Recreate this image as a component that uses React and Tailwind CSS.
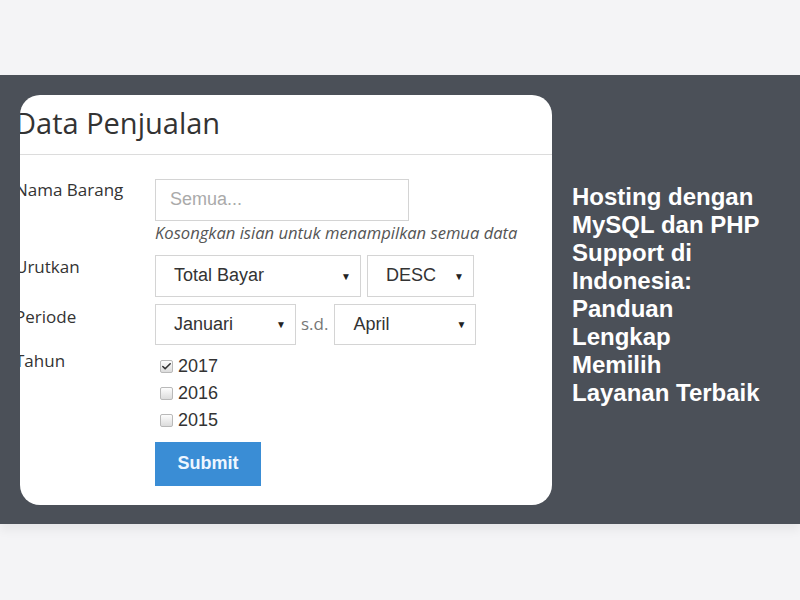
import { Check } from 'lucide-react'

const label = "w-[140px] shrink-0 font-['Open_Sans',sans-serif] text-[17px] text-[#333]"
const ctrl = "font-['Liberation_Sans',Arial,sans-serif] text-[18px] text-[#333]"

function Select({ value, width, pad = 'pl-[18px]', className = '' }) {
  return (
    <div
      className={`flex items-center justify-between border border-[#d4d4d4] bg-white pr-[9px] ${pad} ${className}`}
      style={{ width }}
    >
      <span className={ctrl}>{value}</span>
      <span className="text-[10px] leading-none text-[#222]">▼</span>
    </div>
  )
}

function Year({ year, checked }) {
  return (
    <div className="flex h-[27px] items-center">
      <span className="ml-[5px] flex h-[13px] w-[13px] items-center justify-center rounded-[2px] border border-[#b9b9b9] bg-gradient-to-b from-[#fdfdfd] to-[#dcdcdc]">
        {checked && <Check size={11} strokeWidth={3.5} className="text-[#333]" />}
      </span>
      <span className={`ml-[5px] ${ctrl}`}>{year}</span>
    </div>
  )
}

export default function App() {
  return (
    <main className="min-h-[600px] bg-[#f4f4f6] pt-[75px]">
      <section className="flex h-[449px] items-center bg-[#4b5058] pl-[20px] shadow-[0_6px_10px_rgba(0,0,0,0.06)]">
        {/* form card */}
        <div className="h-[410px] w-[532px] shrink-0 overflow-hidden rounded-[20px] bg-white">
          <div className="-ml-[5px]">
            <h1 className="pt-[8px] font-['Open_Sans',sans-serif] text-[29px] leading-[40px] text-[#333]">
              Data Penjualan
            </h1>
            <div className="mt-[11px] ml-[5px] h-px bg-[#dcdcdc]" />

            <div className="mt-[24px] flex">
              <div className={`${label} -mt-[2px]`}>Nama Barang</div>
              <div>
                <div className="flex h-[42px] w-[254px] items-center border border-[#d4d4d4] pl-[14px]">
                  <span className="font-['Liberation_Sans',Arial,sans-serif] text-[18px] text-[#aaa]">Semua...</span>
                </div>
                <p className="mt-[1px] whitespace-nowrap font-['Open_Sans',sans-serif] text-[16.6px] italic leading-[22px] text-[#555]">
                  Kosongkan isian untuk menampilkan semua data
                </p>
              </div>
            </div>

            <div className="mt-[11px] flex">
              <div className={`${label} -mt-[1px]`}>Urutkan</div>
              <div className="flex h-[42px] gap-[6px]">
                <Select value="Total Bayar" width={206} />
                <Select value="DESC" width={107} />
              </div>
            </div>

            <div className="mt-[7px] flex">
              <div className={label}>Periode</div>
              <div className="flex h-[41px] items-center">
                <Select value="Januari" width={141} className="h-full" />
                <span className="ml-[5px] mr-[6px] font-['Open_Sans',sans-serif] text-[17px] text-[#777]">s.d.</span>
                <Select value="April" width={142} className="h-full" />
              </div>
            </div>

            <div className="mt-[3px] flex">
              <div className={label}>Tahun</div>
              <div className="pt-[5px]">
                <Year year="2017" checked />
                <Year year="2016" />
                <Year year="2015" />
                <button className="mt-[8px] h-[44px] w-[106px] bg-[#3a8dd5] font-['Liberation_Sans',Arial,sans-serif] text-[18px] font-bold text-[#eef6ff]">
                  Submit
                </button>
              </div>
            </div>
          </div>
        </div>

        {/* side title */}
        <h2 className="ml-[20px] mb-[10px] w-[192px] font-['Liberation_Sans',Arial,sans-serif] text-[24px] font-bold leading-[28px] text-white">
          Hosting dengan MySQL dan PHP Support di Indonesia: Panduan Lengkap Memilih Layanan Terbaik
        </h2>
      </section>
    </main>
  )
}
